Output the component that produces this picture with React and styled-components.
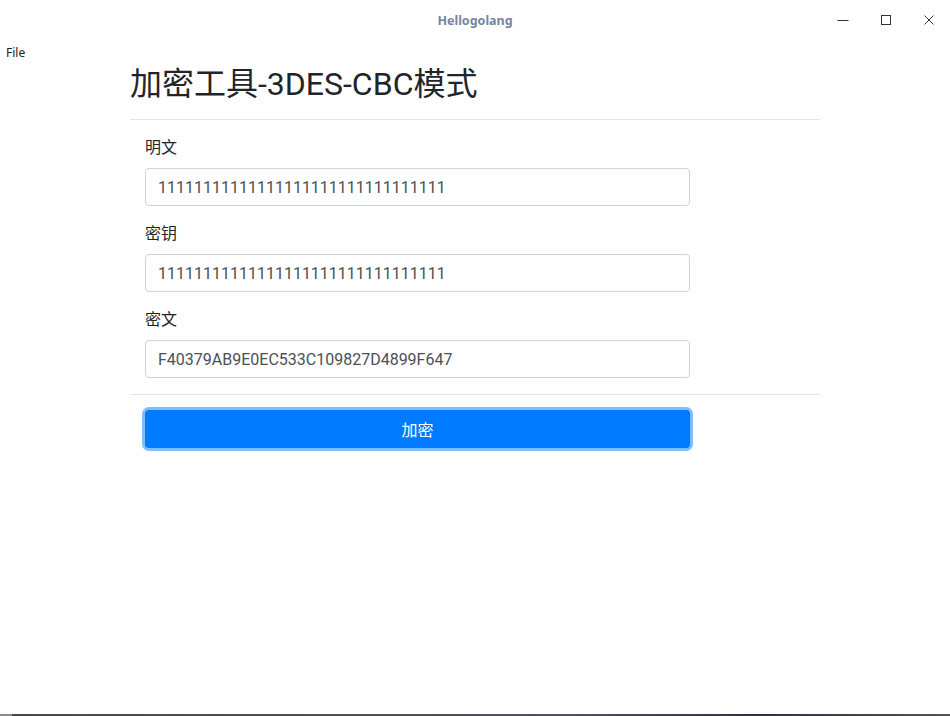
import React from "react";
import styled, { createGlobalStyle } from "styled-components";

const GlobalStyle = createGlobalStyle`
  html, body {
    margin: 0;
    padding: 0;
    background: #ffffff;
  }
  * {
    box-sizing: border-box;
  }
`;

const Window = styled.div`
  width: 950px;
  height: 716px;
  display: flex;
  flex-direction: column;
  background: #ffffff;
  overflow: hidden;
  font-family: Roboto, "Noto Sans CJK SC", sans-serif;
`;

const TitleBar = styled.div`
  height: 40px;
  flex-shrink: 0;
  position: relative;
  display: flex;
  align-items: center;
  justify-content: center;
`;

const Title = styled.div`
  font-family: "Noto Sans", "Open Sans", sans-serif;
  font-weight: 700;
  font-size: 12.5px;
  color: #7585a3;
`;

const Controls = styled.div`
  position: absolute;
  right: 9px;
  top: 0;
  height: 40px;
  display: flex;
  align-items: center;
  gap: 19px;
`;

const CtrlButton = styled.div`
  width: 24px;
  height: 24px;
  display: flex;
  align-items: center;
  justify-content: center;
`;

const MenuBar = styled.div`
  height: 24px;
  flex-shrink: 0;
  display: flex;
  align-items: center;
  padding-left: 6px;
`;

const MenuItem = styled.span`
  font-family: "Noto Sans", "Open Sans", sans-serif;
  font-size: 12px;
  color: #222;
`;

const Container = styled.div`
  margin-left: 130px;
  width: 690px;
  color: #212529;
`;

const Heading = styled.h1`
  margin: 1px 0 16px 0;
  font-size: 32px;
  font-weight: 400;
  line-height: 38px;
  color: #212529;
`;

const Rule = styled.hr`
  margin: 0;
  border: 0;
  border-top: 1px solid #e2e4e7;
`;

const Form = styled.div`
  padding: 16px 0 16px 15px;
  display: flex;
  flex-direction: column;
  gap: 16px;
`;

const Group = styled.div`
  display: flex;
  flex-direction: column;
  gap: 8px;
`;

const Label = styled.label`
  font-size: 16px;
  line-height: 24px;
  color: #212529;
`;

const Input = styled.div`
  width: 545px;
  height: 38px;
  border: 1px solid #ced4da;
  border-radius: 4px;
  padding: 0 12px;
  display: flex;
  align-items: center;
  font-size: 16px;
  color: #495057;
`;

const Actions = styled.div`
  padding: 15px 0 0 15px;
`;

const Button = styled.div`
  width: 545px;
  height: 38px;
  border-radius: 4px;
  background: #007bff;
  color: #ffffff;
  display: flex;
  align-items: center;
  justify-content: center;
  font-size: 16px;
  box-shadow: 0 0 0 3px rgba(0, 123, 255, 0.5);
`;

const Spacer = styled.div`
  flex: 1;
`;

const BottomEdge = styled.div`
  height: 2px;
  flex-shrink: 0;
  background: linear-gradient(90deg, #8a8a8a 0 12px, #4a4a4a 12px, #505458 60%, #2e3238 80%, #555 100%);
`;

const fields = [
  { label: "明文", value: "11111111111111111111111111111111" },
  { label: "密钥", value: "11111111111111111111111111111111" },
  { label: "密文", value: "F40379AB9E0EC533C109827D4899F647" },
];

export default function App() {
  return (
    <Window>
      <GlobalStyle />
      <TitleBar>
        <Title>Hellogolang</Title>
        <Controls>
          <CtrlButton>
            <svg width="12" height="12" viewBox="0 0 12 12">
              <line x1="0.5" y1="6.5" x2="11.5" y2="6.5" stroke="#333" strokeWidth="1" />
            </svg>
          </CtrlButton>
          <CtrlButton>
            <svg width="12" height="12" viewBox="0 0 12 12">
              <rect x="1.5" y="1.5" width="9" height="9" fill="none" stroke="#333" strokeWidth="1" />
            </svg>
          </CtrlButton>
          <CtrlButton>
            <svg width="12" height="12" viewBox="0 0 12 12">
              <path d="M1.5 1.5 L10.5 10.5 M10.5 1.5 L1.5 10.5" stroke="#333" strokeWidth="1" />
            </svg>
          </CtrlButton>
        </Controls>
      </TitleBar>
      <MenuBar>
        <MenuItem>File</MenuItem>
      </MenuBar>
      <Container>
        <Heading>加密工具-3DES-CBC模式</Heading>
        <Rule />
        <Form>
          {fields.map((f) => (
            <Group key={f.label}>
              <Label>{f.label}</Label>
              <Input>{f.value}</Input>
            </Group>
          ))}
        </Form>
        <Rule />
        <Actions>
          <Button>加密</Button>
        </Actions>
      </Container>
      <Spacer />
      <BottomEdge />
    </Window>
  );
}
